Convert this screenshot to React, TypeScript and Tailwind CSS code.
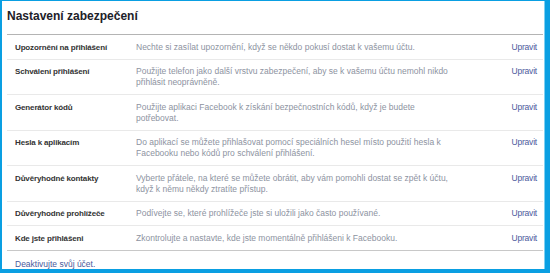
import React from "react";

const rows: { label: string; desc: string }[] = [
  { label: "Upozornění na přihlášení", desc: "Nechte si zasílat upozornění, když se někdo pokusí dostat k vašemu účtu." },
  { label: "Schválení přihlášení", desc: "Použijte telefon jako další vrstvu zabezpečení, aby se k vašemu účtu nemohl nikdo přihlásit neoprávněně." },
  { label: "Generátor kódů", desc: "Použijte aplikaci Facebook k získání bezpečnostních kódů, když je budete potřebovat." },
  { label: "Hesla k aplikacím", desc: "Do aplikací se můžete přihlašovat pomocí speciálních hesel místo použití hesla k Facebooku nebo kódů pro schválení přihlášení." },
  { label: "Důvěryhodné kontakty", desc: "Vyberte přátele, na které se můžete obrátit, aby vám pomohli dostat se zpět k účtu, když k němu někdy ztratíte přístup." },
  { label: "Důvěryhodné prohlížeče", desc: "Podívejte se, které prohlížeče jste si uložili jako často používané." },
  { label: "Kde jste přihlášeni", desc: "Zkontrolujte a nastavte, kde jste momentálně přihlášeni k Facebooku." },
];

export default function App() {
  return (
    <div
      className="w-[550px] h-[273px] bg-[#0a9fe2] pt-[1px] pl-[2px] pr-[5px] pb-[4px]"
      style={{ fontFamily: '"Liberation Sans", Arial, sans-serif' }}
    >
      <div className="h-full bg-white border-r border-[#7fd0f2] pl-[5px] pr-[1px]">
        <div className="pt-[8px] pb-[10px] border-b border-[#b4b4b4]">
          <h1 className="text-[12px] leading-[15px] font-bold text-[#1d2129]">Nastavení zabezpečení</h1>
        </div>
        {rows.map((r, i) => (
          <div
            key={i}
            className={`grid grid-cols-[121px_320px_1fr] pl-[8px] pr-[6px] pt-[6.5px] pb-[6px] leading-[11px] border-b ${
              i === rows.length - 1 ? "border-[#c8c8c8]" : "border-[#e9e9e9]"
            }`}
          >
            <div className="text-[8px] tracking-[-0.15px] font-bold text-[#333333]">{r.label}</div>
            <div className="text-[8.5px] text-[#8d939f]">{r.desc}</div>
            <div className="text-right text-[8.5px] tracking-[-0.2px] text-[#4b5a9c]">Upravit</div>
          </div>
        ))}
        <div className="pl-[8px] pt-[8px] text-[8.5px] leading-[11px] text-[#4b5a9c]">Deaktivujte svůj účet.</div>
      </div>
    </div>
  );
}
